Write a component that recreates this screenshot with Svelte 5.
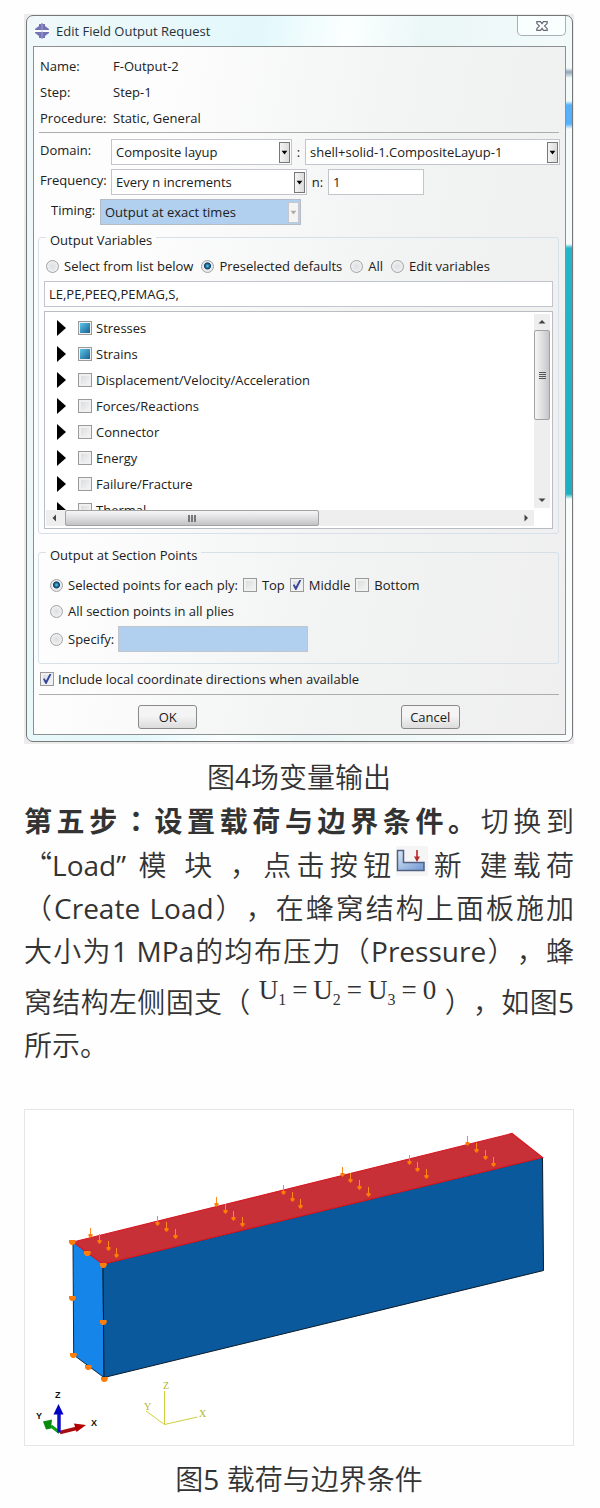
<script>
  const variables = [
    { name: 'Stresses', partial: true },
    { name: 'Strains', partial: true },
    { name: 'Displacement/Velocity/Acceleration' },
    { name: 'Forces/Reactions' },
    { name: 'Connector' },
    { name: 'Energy' },
    { name: 'Failure/Fracture' },
    { name: 'Thermal' }
  ];

  const modes = ['Select from list below', 'Preselected defaults', 'All', 'Edit variables'];
  let mode = $state('Preselected defaults');
  let points = $state('selected');

  // Tips of the pressure arrows on the top face
  const loads = [
    [65, 128], [74, 134], [83, 141], [91, 148],
    [132, 116], [141, 122], [150, 129],
    [191, 97], [200, 104], [208, 111], [217, 117],
    [258, 85], [267, 92], [275, 99],
    [317, 67], [325, 73], [334, 80], [343, 87],
    [384, 55], [392, 62], [401, 69],
    [442, 36], [451, 43], [460, 50], [468, 57]
  ];
  // Fixed supports on the left face
  const supports = [
    [47, 132], [62, 143], [78, 155], [47, 188], [78, 212], [48, 245], [63, 257], [79, 269]
  ];
</script>

{#snippet arrow()}
  <svg class="drop" viewBox="0 0 11 21" aria-hidden="true"><path d="M2 8.500h7L5.500 13z" /></svg>
{/snippet}

<main>
  <figure>
    <div class="shot">
      <section class="window" aria-label="Edit Field Output Request">
        <header>
          <svg class="logo" viewBox="0 0 16 16" aria-hidden="true">
            <path d="M5 1h2l1-1 1 1h2v2l4 3v1H1V6l4-3zM1 9h14v1l-4 3v2H9l-1 1-1-1H5v-2l-4-3z" fill="#7474b4" />
            <path d="M8 1v14" stroke="#8c8cc4" stroke-width="2" />
            <path d="M0 8h16" stroke="#fff" stroke-width="1.500" />
          </svg>
          <h1>Edit Field Output Request</h1>
          <button class="close" aria-label="Close">
            <svg viewBox="0 0 12 10" aria-hidden="true">
              <path d="M.8.700h3.700L6 2.700 7.500.700h3.700v1.600L8.600 5l2.600 2.700v1.600H7.500L6 7.300 4.500 9.300H.8V7.700L3.400 5 .8 2.300z" fill="#fff" stroke="#666b78" stroke-width="1.200" />
            </svg>
          </button>
        </header>

        <form class="client" onsubmit={(e) => e.preventDefault()}>
          <dl>
            <dt>Name:</dt><dd>F-Output-2</dd>
            <dt>Step:</dt><dd>Step-1</dd>
            <dt>Procedure:</dt><dd>Static, General</dd>
          </dl>
          <hr />
          <div class="row">
            <label class="key" for="domain">Domain:</label>
            <span class="combo domain"><select id="domain"><option>Composite layup</option></select>{@render arrow()}</span>
            <label class="mid" for="layup">:</label>
            <span class="combo grow"><select id="layup"><option>shell+solid-1.CompositeLayup-1</option></select>{@render arrow()}</span>
          </div>
          <div class="row">
            <label class="key" for="freq">Frequency:</label>
            <span class="combo freq"><select id="freq"><option>Every n increments</option></select>{@render arrow()}</span>
            <label class="mid n" for="n">n:</label>
            <input class="text count" id="n" type="text" value="1" />
          </div>
          <div class="row timing">
            <label class="key" for="timing">Timing:</label>
            <span class="combo off"><select id="timing" disabled><option>Output at exact times</option></select>{@render arrow()}</span>
          </div>

          <fieldset class="vars">
            <legend>Output Variables</legend>
            <div class="modes">
              {#each modes as m}
                <label><input type="radio" name="mode" value={m} bind:group={mode} />{m}</label>
              {/each}
            </div>
            <input class="text" type="text" aria-label="Selected variables" value="LE,PE,PEEQ,PEMAG,S," />
            <div class="list">
              <ul>
                {#each variables as v}
                  <li>
                    <svg class="tri" viewBox="0 0 9 16" aria-hidden="true"><path d="M0 0l9 8-9 8z" /></svg>
                    <label><input type="checkbox" class:partial={v.partial} />{v.name}</label>
                  </li>
                {/each}
              </ul>
              <div class="vbar" aria-hidden="true">
                <svg viewBox="0 0 16 16"><path d="M4.500 9.500h7L8 6z" /></svg>
                <div class="thumb"><i></i><i></i><i></i><i></i></div>
                <svg viewBox="0 0 16 16"><path d="M4.500 6.500h7L8 10z" /></svg>
              </div>
              <div class="hbar" aria-hidden="true">
                <svg viewBox="0 0 16 16"><path d="M10 4.500v7L6.500 8z" /></svg>
                <div class="thumb"><i></i><i></i><i></i></div>
                <svg viewBox="0 0 16 16"><path d="M6.500 4.500v7L10 8z" /></svg>
              </div>
            </div>
          </fieldset>

          <fieldset class="points">
            <legend>Output at Section Points</legend>
            <div class="line">
              <label><input type="radio" name="points" value="selected" bind:group={points} />Selected points for each ply:</label>
              <label><input type="checkbox" />Top</label>
              <label><input type="checkbox" checked />Middle</label>
              <label><input type="checkbox" />Bottom</label>
            </div>
            <div class="line">
              <label><input type="radio" name="points" value="all" bind:group={points} />All section points in all plies</label>
            </div>
            <div class="line last">
              <label><input type="radio" name="points" value="specify" bind:group={points} />Specify:</label>
              <input class="text specify" type="text" aria-label="Section points" disabled />
            </div>
          </fieldset>

          <label class="local"><input type="checkbox" checked />Include local coordinate directions when available</label>
          <hr />
          <div class="actions">
            <button class="push">OK</button>
            <button class="push">Cancel</button>
          </div>
        </form>
      </section>
    </div>
    <figcaption>图<span class="latin">4</span>场变量输出</figcaption>
  </figure>

  <p>
    <span class="full"><strong>第五步<span class="colon">：</span>设置载荷与边界条件。</strong>切换到</span>
    <span class="full"><span class="quote">“</span><span class="latin">Load”</span> 模 块 ，点击按钮<svg class="load" viewBox="0 0 32 30" role="img" aria-label="Create Load">
        <defs>
          <linearGradient id="steel" x2="1" y2="1"><stop stop-color="#dbe9f8" /><stop offset="1" stop-color="#6f98d2" /></linearGradient>
        </defs>
        <path d="M0 0h32v30H0z" fill="#f5f5f5" />
        <path d="M1.500 4.500h6v12h20.500v8H1.500z" fill="url(#steel)" stroke="#526083" stroke-width="1.500" />
        <path d="M21 4v10" stroke="#c94b4b" stroke-width="2" />
        <path d="M18 10.500h6L21 16z" fill="#b52c2c" />
      </svg>新 建载荷</span>
    <span class="full">（<span class="latin">Create Load</span>），在蜂窝结构上面板施加</span>
    <span class="full">大小为<span class="latin">1 MPa</span>的均布压力（<span class="latin">Pressure</span>），蜂</span>
    <span class="full">窝结构左侧固支（<span class="formula"><span>U<sub>1</sub></span><span>=</span><span>U<sub>2</sub></span><span>=</span><span>U<sub>3</sub></span><span>=</span><span>0</span></span>），如图<span class="latin">5</span></span>
    <span class="full end">所示。</span>
  </p>

  <figure>
    <svg class="scene" viewBox="0 0 548 335" role="img" aria-label="载荷与边界条件">
      <path d="M48 132L78 154 79 267.500 48.700 245z" fill="#1585ea" stroke="#12283f" />
      <path d="M78 154L517.500 47.500 518.500 160.500 79 267.500z" fill="#0a599d" stroke="#0b1b2b" />
      <path d="M48 132L487 23.500 517.500 47.500 78 154z" fill="#c83038" stroke="#d81a22" stroke-width="1.200" />
      {#each loads as [x, y]}
        <path d="M{x + 0.5} {y - 10}v7" stroke="#ff8c1a" />
        <path d="M{x - 1.5} {y - 4}h4v2l-2 2-2-2z" fill="#ff7e00" />
      {/each}
      {#each supports as [x, y]}
        <path d="M{x - 3} {y - 2}h6l1 1-1 3-2 1h-2l-2-2z" fill="#ff7e0a" />
      {/each}
      <path d="M34.500 322.500L26 316" stroke="#0aa014" stroke-width="3" />
      <path d="M18 311.500l9-2-1 9-5 1z" fill="#078a0e" />
      <path d="M35 322.500l18-4.500" stroke="#a80d0d" stroke-width="3.500" />
      <path d="M49 313.500l12 1.500-9.500 7z" fill="#b20000" />
      <path d="M34 322.500V302" stroke="#1010c8" stroke-width="3.500" />
      <path d="M28.500 304.500l5-10.500 5 10.500z" fill="#0000c4" />
      <g class="axes"><text x="30" y="288">Z</text><text x="11" y="309">Y</text><text x="66" y="316">X</text></g>
      <path d="M139.500 281v33.500l33-7.500M139.500 314.500L121 301" fill="none" stroke="#cfcf3c" />
      <g class="ghost"><text x="138" y="279">Z</text><text x="119" y="300">Y</text><text x="174" y="307">X</text></g>
    </svg>
    <figcaption>图<span class="latin">5</span> 载荷与边界条件</figcaption>
  </figure>
</main>

<style>
  :global(body) { margin: 0; background: #fefefe; }
  main {
    padding: 14px 26px 8px 24px;
    color: #333;
    font: 28px/43px "Open Sans", "Noto Sans CJK SC", sans-serif;
    text-spacing-trim: space-all;
  }
  figure { margin: 0; }
  figcaption { text-align: center; font-weight: 350; margin-top: 12px; }

  .shot { background: #ececec; padding: 1px 1px 2px 2px; }
  .window {
    border: 1px solid #777;
    border-radius: 7px;
    padding: 0 6px 6px;
    background:
      linear-gradient(transparent 52px, #8fa3ba 56px, transparent 62px, transparent 85px, #55b1fb 89px, #55b1fb 108px, transparent 113px, transparent 228px, #25b5c6 232px, #1fafc0 478px, transparent 483px) right / 6px 100% no-repeat,
      linear-gradient(100deg, #f0f8fa, #e3f8fb 35%, #fbffff 48%, #eaf7f6 60%, #fafdfd);
    color: #202020;
    font: 13px/26px "Open Sans", sans-serif;
  }
  header { display: flex; align-items: center; height: 30px; gap: 6px; padding-left: 1px; }
  .logo { width: 16px; height: 16px; }
  h1 { flex: 1; margin: 0; font-size: 13px; font-weight: 400; color: #263238; }
  .close {
    align-self: flex-start;
    display: grid;
    place-items: center;
    width: 49px;
    height: 20px;
    padding: 0;
    border: 1px solid #a8b0b2;
    border-top: 0;
    border-radius: 0 0 5px 5px;
    background: #f9fefe;
  }
  .close svg { width: 12px; height: 10px; }

  .client {
    border: 1px solid #8c9090;
    padding: 6px 5px 4px 4px;
    background: linear-gradient(100deg, #fdfdfd 20%, #f2f3f3 60%, #efefef);
  }
  dl { display: grid; grid-template-columns: 73px 1fr; margin: 0 0 0 2px; }
  dd { margin: 0; }
  hr { border: 0; border-top: 1px solid #adadad; margin: 1px 1px 6px 1px; }
  .row { display: flex; align-items: center; margin: 0 0 4px 2px; }
  .key { width: 71px; line-height: 22px; align-self: flex-start; }
  .mid { width: 13px; text-align: center; }
  .mid.n { width: 21px; }
  .row.timing { margin-bottom: 0; }
  .timing .key { width: 49px; padding-left: 11px; }
  .combo { display: grid; box-sizing: border-box; height: 26px; border: 1px solid #c2c6cc; background: #fff; }
  .combo.domain { width: 181px; }
  .combo.freq { width: 196px; }
  .combo.off { width: 201px; background: #b1cfee; border-color: #b5bcc5; }
  .combo.grow { flex: 1; }
  .combo > :global(*) { grid-area: 1 / 1; }
  select {
    appearance: none;
    border: 0;
    padding: 0 16px 0 4px;
    background: none;
    color: #202020;
    opacity: 1;
    font: inherit;
    line-height: 24px;
    min-width: 0;
  }
  .drop {
    box-sizing: border-box;
    justify-self: end;
    align-self: center;
    width: 11px;
    height: 21px;
    margin-right: 1px;
    border: 1px solid #777;
    background: linear-gradient(90deg, #f4f4f4, #dcdcdc);
    pointer-events: none;
  }
  .off .drop { border-color: #c4c8cc; background: #f4f4f4; fill: #aaa; }
  .text {
    box-sizing: border-box;
    height: 26px;
    border: 1px solid #c2c6cc;
    background: #fff;
    padding: 0 4px;
    color: #202020;
    font: inherit;
    line-height: 24px;
    min-width: 0;
  }
  .count { width: 96px; }

  fieldset { margin: 0 1px 0 0; border: 1px solid #d5e0e8; border-radius: 3px; padding: 0 5px 4px; min-width: 0; }
  legend { padding: 6px 4px 0; margin-left: 2px; line-height: 18px; }
  .vars .text { display: block; width: 100%; }
  .modes { display: flex; gap: 8px; padding: 4px 0 2px 2px; }
  label { white-space: nowrap; }
  label:has(input) { display: flex; align-items: center; gap: 5px; }

  input[type='radio'], input[type='checkbox'] { appearance: none; box-sizing: border-box; margin: 0; flex: none; }
  input[type='radio'] {
    width: 13px;
    height: 13px;
    border: 1px solid #a3a3a3;
    border-radius: 50%;
    background: radial-gradient(#dcdfe2, #f6f6f6);
  }
  input[type='radio']:checked { background: radial-gradient(circle at 50% 45%, #5dd0f0, #155b88 28%, #123f66 38%, #e8eaec 48%); }
  input[type='checkbox'] {
    display: grid;
    width: 14px;
    height: 14px;
    border: 1px solid #9a9a9a;
    background: linear-gradient(135deg, #d5d8dc, #f7f7f7);
    box-shadow: inset 0 0 0 2px #f0f0f0;
  }
  input[type='checkbox']::before { content: ''; margin: 1px; }
  input[type='checkbox']:checked::before { background: #36479c; clip-path: polygon(10% 50%, 25% 42%, 40% 65%, 75% 0, 95% 0, 45% 100%, 35% 100%); }
  input.partial::before { margin: 1px; background: linear-gradient(135deg, #5bc6e8, #1a5f92); }

  .list {
    display: grid;
    grid-template: 198px 16px / 1fr 16px;
    margin-top: 4px;
    border: 1px solid #b9bdc2;
    padding: 0 2px 2px 1px;
    background: #fff;
  }
  ul { margin: 0; padding: 3px 0 0 11px; list-style: none; overflow: hidden; }
  li { display: flex; align-items: center; gap: 12px; height: 26px; }
  li label:has(input) { gap: 4px; }
  .tri { width: 9px; height: 16px; }
  .vbar, .hbar { display: flex; background: #eee; fill: #444; }
  .vbar { flex-direction: column; justify-content: space-between; margin: 2px 0; }
  .vbar svg, .hbar svg { flex: none; width: 16px; height: 16px; }
  .hbar svg:last-child { margin-left: auto; }
  .vbar .thumb { height: 90px; margin-bottom: auto; flex-direction: column; background: linear-gradient(90deg, #f6f6f6, #dcdcdf 55%, #c6c6ca); }
  .hbar .thumb { width: 52%; margin-left: 3px; background: linear-gradient(#f6f6f6, #dcdcdf 55%, #c2c2c4); }
  .thumb { display: flex; box-sizing: border-box; align-items: center; justify-content: center; gap: 1px; border: 1px solid #a2a2a2; border-radius: 2px; }
  .vbar i { width: 7px; height: 1px; background: #555; }
  .hbar i { width: 2px; height: 7px; background: #777; }

  .points { margin-top: 6px; padding: 0 11px 11px; }
  .points legend { margin-left: -4px; }
  .line { display: flex; align-items: center; gap: 5px; }
  .line:first-of-type { padding-top: 8px; }
  .line.last { padding-top: 2px; gap: 4px; }
  .specify { width: 190px; background: #b1cfee; }
  .local { padding: 2px 0 1px 2px; }
  .local:has(input) { gap: 4px; }
  .actions { display: flex; justify-content: center; gap: 39%; padding: 4px 0 1px; }
  .push {
    width: 59px;
    height: 24px;
    padding: 0;
    border: 1px solid #8a8a8a;
    border-radius: 3px;
    background: linear-gradient(#f4f4f4 45%, #dcdcdc);
    color: #202020;
    font: 13px/20px "Open Sans", sans-serif;
  }

  p { margin: 0 0 42px; font-weight: 350; }
  .full { display: block; white-space: nowrap; text-align: justify; text-align-last: justify; }
  .end { text-align-last: left; }
  strong { font-weight: 700; }
  .latin { font-weight: 400; }
  .colon { font-family: "Noto Sans CJK TC", sans-serif; }
  .quote { font-family: "Noto Sans CJK SC", sans-serif; }
  .load { width: 32px; height: 30px; vertical-align: 0; }
  .formula {
    display: inline-flex;
    gap: 6px;
    margin: 0 8px;
    padding-top: 3px;
    vertical-align: 14px;
    font: 27px/28px "Liberation Serif", serif;
    text-align-last: left;
  }
  sub { font-size: 16px; line-height: 1; vertical-align: -6px; }

  .scene { display: block; width: 100%; box-sizing: border-box; border: 1px solid #e6e6e6; background: #fff; }
  .axes { font: 700 9px "Liberation Sans", sans-serif; fill: #111; }
  .ghost { font: 10px "Liberation Serif", serif; fill: #b4b42c; }
</style>
